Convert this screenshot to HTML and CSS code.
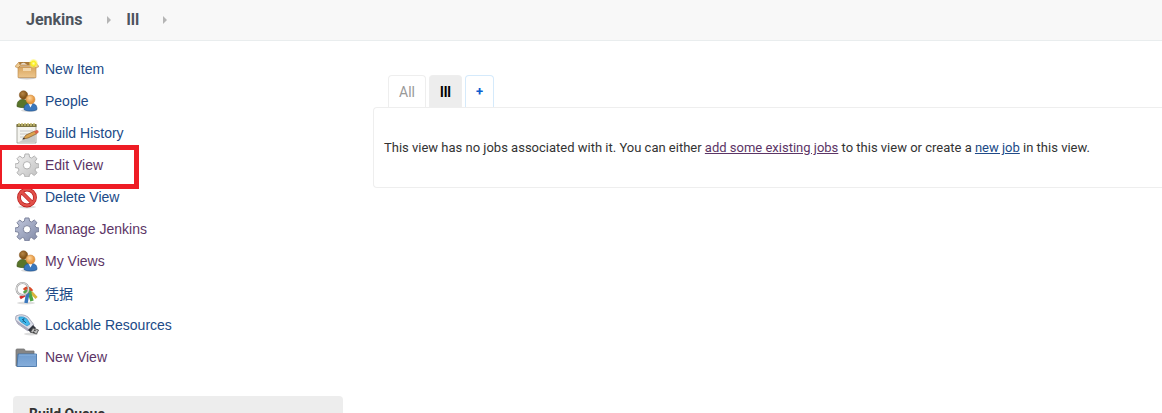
FILE: index.html
```html
<!DOCTYPE html>
<html lang="en">

<head>
    <meta charset="UTF-8">
    <meta name="viewport" content="width=device-width, initial-scale=1.0">
    <title>lll [Jenkins]</title>
    <link rel="stylesheet" href="styles.css">
</head>

<body>
    <!-- shared icon parts -->
    <svg class="defs" width="0" height="0" aria-hidden="true">
        <defs>
            <linearGradient id="box" x1="0" y1="0" x2="0" y2="1"><stop offset="0" stop-color="#d9a55f"/><stop offset="1" stop-color="#edc78e"/></linearGradient>
            <linearGradient id="blue" x1="0" y1="0" x2="0" y2="1"><stop offset="0" stop-color="#6e9bcd"/><stop offset="1" stop-color="#86aedb"/></linearGradient>
            <linearGradient id="silver" x1="0" y1="0" x2="1" y2="1"><stop offset="0" stop-color="#f2f2f2"/><stop offset="1" stop-color="#c0c0c0"/></linearGradient>
            <linearGradient id="steel" x1="0" y1="0" x2="1" y2="1"><stop offset="0" stop-color="#c3c9de"/><stop offset="1" stop-color="#8089a6"/></linearGradient>
            <radialGradient id="sun"><stop offset="0" stop-color="#fffcae"/><stop offset=".5" stop-color="#fbef20"/><stop offset="1" stop-color="#fff36a" stop-opacity=".3"/></radialGradient>
            <radialGradient id="face" cx=".4" cy=".35"><stop offset="0" stop-color="#ffd7a0"/><stop offset="1" stop-color="#e5973f"/></radialGradient>
            <radialGradient id="face-dark" cx=".4" cy=".35"><stop offset="0" stop-color="#b88747"/><stop offset="1" stop-color="#835318"/></radialGradient>
            <symbol id="people" viewBox="0 0 24 24">
                <ellipse cx="14" cy="21.500" rx="8" ry="1.500" fill="#ddd"/>
                <path d="M2 17.500c0-5 2-7 6-7s5.500 3 5.500 7c-3 1.500-8.500 1.500-11.500 0z" fill="#59752a" stroke="#3f541b" stroke-width=".7"/>
                <circle cx="8.500" cy="6" r="4.200" fill="url(#face-dark)" stroke="#80501c" stroke-width=".5"/>
                <path d="M9 20.500c0-4.500 2-6 6.500-6s6.500 1.500 6.500 6c-3 2-10 2-13 0z" fill="#3977bd" stroke="#24568f" stroke-width=".7"/>
                <path d="M13.500 14.500h4l-2 4z" fill="#fff"/>
                <circle cx="15.500" cy="10.500" r="4.500" fill="url(#face)" stroke="#ce8636" stroke-width=".5"/>
            </symbol>
            <symbol id="gear" viewBox="0 0 24 24">
                <path fill-rule="evenodd" d="M10 1h4l.6 3.200 2 .8 2.700-2 2.700 2.700-2 2.700.8 2 3.200.6v3.500l-3.200.6-.8 2 2 2.700-2.700 2.700-2.700-2-2 .8-.6 2.700h-4l-.6-2.700-2-.8-2.700 2L2 19.800l2-2.700-.8-2L0 14.500V11l3.200-.6.8-2-2-2.700L4.700 3l2.700 2 2-.8zM12 8.600a3.700 3.700 0 1 0 0 7.400 3.700 3.700 0 0 0 0-7.400z"/>
            </symbol>
        </defs>
    </svg>

    <nav class="breadcrumbs">
        <a href="#">Jenkins</a>
        <span class="arrow"></span>
        <a href="#">lll</a>
        <span class="arrow"></span>
    </nav>

    <div class="page-body">
        <!-- side panel -->
        <aside class="side-panel">
            <ul class="tasks">
                <li class="task">
                    <a href="#">
                        <svg class="icon" viewBox="0 0 24 24">
                            <ellipse cx="12" cy="21" rx="9" ry="1.500" fill="#ccc"/>
                            <path d="M4 5h16v6H4z" fill="#a97838"/>
                            <path d="M5 8q3-4 6-1t7-1v4H5z" fill="#e9dccb"/>
                            <path d="M3 10h18v10.500H3z" fill="url(#box)" stroke="#b88748" stroke-width=".6"/>
                            <path d="M4 5L0 9.500l3 1.500 2-2h14l2 2 3-1.500L20 5l-1 3H5z" fill="#efcb91" stroke="#b37e3c" stroke-width=".6"/>
                            <path d="M8 11h8v3H8z" fill="#f3d8ae"/>
                            <circle cx="18.500" cy="6.500" r="4.500" fill="url(#sun)"/>
                        </svg>
                        New Item
                    </a>
                </li>
                <li class="task">
                    <a href="#"><svg class="icon"><use href="#people"/></svg>People</a>
                </li>
                <li class="task">
                    <a href="#">
                        <svg class="icon" viewBox="0 0 24 24">
                            <path d="M2 4h19v18H2z" fill="#f4f4ef" stroke="#999990" stroke-width=".8"/>
                            <path d="M1.500 3h20v3h-20z" fill="#7b7443"/>
                            <path d="M4 2v3M7 2v3M10 2v3M13 2v3M16 2v3M19 2v3" stroke="#c9bd73" stroke-width="1.500"/>
                            <path d="M5 10h13M5 13h9M5 16h5" stroke="#c8c8c8" stroke-width="1"/>
                            <path d="M20 21H4l7-4 8-3h1z" fill="#c9c9c5"/>
                            <path d="M8 18l3-4 9-4 2 2.500-9 4.500z" fill="#dda44e" stroke="#805826" stroke-width=".7"/>
                            <path d="M19 10.500l2.500-1.500q2.500 0 2 2.500l-2.500 1.500z" fill="#d9614a"/>
                            <path d="M7 18.500l2-2 1 1.500z" fill="#333"/>
                        </svg>
                        Build History
                    </a>
                </li>
                <li class="task highlighted">
                    <a class="visited" href="#"><svg class="icon gear-light"><use href="#gear"/></svg>Edit View</a>
                </li>
                <li class="task">
                    <a href="#">
                        <svg class="icon" viewBox="0 0 24 24">
                            <ellipse cx="12" cy="22" rx="9" ry="1.500" fill="#ddd"/>
                            <circle cx="12" cy="12.500" r="8" fill="#fff" stroke="#b81616" stroke-width="3.800"/>
                            <path d="M6.500 7l11 11" stroke="#b81616" stroke-width="3.800"/>
                            <circle cx="12" cy="12.500" r="8" fill="none" stroke="#e1514a" stroke-width="2.500"/>
                            <path d="M6.500 7l11 11" stroke="#e1514a" stroke-width="2.500"/>
                        </svg>
                        Delete View
                    </a>
                </li>
                <li class="task">
                    <a class="visited" href="#"><svg class="icon gear-dark"><use href="#gear"/></svg>Manage Jenkins</a>
                </li>
                <li class="task">
                    <a class="visited" href="#"><svg class="icon"><use href="#people"/></svg>My Views</a>
                </li>
                <li class="task">
                    <a href="#">
                        <svg class="icon" viewBox="0 0 24 24">
                            <ellipse cx="11" cy="22" rx="9" ry="1.500" fill="#ddd"/>
                            <path d="M10 14l-5 3" stroke="#d72c2c" stroke-width="3"/>
                            <path d="M16 11l5.500 6" stroke="#d8b43c" stroke-width="3"/>
                            <path d="M14 10l3 10" stroke="#4ca642" stroke-width="3.500"/>
                            <path d="M9 9q4-5 8 1" fill="none" stroke="#d94a28" stroke-width="3"/>
                            <path d="M9 12q3-4 7 0" fill="none" stroke="#54a648" stroke-width="3"/>
                            <path d="M13 12q-1 4-2 10" fill="none" stroke="#3977bd" stroke-width="3.500"/>
                            <circle cx="7.500" cy="8" r="6" fill="none" stroke="#999" stroke-width="2"/>
                            <circle cx="7.500" cy="8" r="6" fill="none" stroke="#eee" stroke-width=".9"/>
                        </svg>
                        <span class="cjk">凭据</span>
                    </a>
                </li>
                <li class="task">
                    <a href="#">
                        <svg class="icon" viewBox="0 0 24 24">
                            <ellipse cx="16" cy="21" rx="7" ry="1.500" fill="#ddd"/>
                            <path d="M1 3q6-3 12 1l6 8-6 6-10-7Q-1 6 1 3z" fill="#dcdfe9" stroke="#9a9caf" stroke-width=".8"/>
                            <path d="M1 7q1 3 4 5l8 6 1-2-9-6z" fill="#a8a6bb"/>
                            <path d="M4 4q5-1 8 2l3 5-3 2-6-4q-3-3-2-5z" fill="#42b8ed" stroke="#2388be" stroke-width=".6"/>
                            <path d="M7 6l4 4M9 5l-1 4" stroke="#1c638a" stroke-width="1"/>
                            <path d="M18 12l-5 5 3 3 5-5z" fill="#333740"/>
                            <path d="M18 15l5.500 2-2 4-6-2z" fill="#bbb" stroke="#444" stroke-width=".8"/>
                            <path d="M19 17l1.500.5M18 19l1.500.5" stroke="#222" stroke-width="1.200"/>
                        </svg>
                        Lockable Resources
                    </a>
                </li>
                <li class="task">
                    <a class="visited" href="#">
                        <svg class="icon" viewBox="0 0 24 24">
                            <path d="M1 21V5q0-1 1-1h7q1 0 1 2h9v15z" fill="#858585" stroke="#757575" stroke-width=".8"/>
                            <path d="M3 9h18.500v12.500H2z" fill="url(#blue)" stroke="#3e6ea5" stroke-width=".8"/>
                            <path d="M4 10h17" stroke="#98bde4" stroke-width=".8"/>
                        </svg>
                        New View
                    </a>
                </li>
            </ul>
            <section class="pane">
                <h2 class="pane-header">Build Queue</h2>
            </section>
        </aside>

        <!-- main panel -->
        <main class="main-panel">
            <nav class="tabs">
                <a class="tab" href="#">All</a>
                <a class="tab active" href="#">lll</a>
                <a class="tab add" href="#">+</a>
            </nav>
            <div class="view">
                This view has no jobs associated with it. You can either
                <a class="visited" href="#">add some existing jobs</a>
                to this view or create a <a href="#">new job</a> in this view.
            </div>
        </main>
    </div>
</body>

</html>
```
FILE: styles.css
```css
/* base */

body {
    margin: 0;
    height: 100vh;
    overflow: hidden;
    background: #fff;
    color: #333;
    font: 13px/20px Roboto, "Liberation Sans", sans-serif;
}

a {
    color: #204a87;
}

a.visited {
    color: #5c3566;
}

.defs {
    position: absolute;
}

/* breadcrumbs */

.breadcrumbs {
    display: flex;
    align-items: center;
    height: 40px;
    padding-left: 26px;
    border-bottom: 1px solid #e9edee;
    background: #f8f8f8;
}

.breadcrumbs a {
    color: #4d545d;
    font-size: 16px;
    font-weight: bold;
    text-decoration: none;
}

.arrow {
    margin: 0 16px 0 24px;
    border: 4px solid transparent;
    border-right: 0;
    border-left-color: #b5b5b5;
}

/* side panel */

.page-body {
    display: flex;
}

.side-panel {
    flex: none;
    width: 330px;
    padding: 12px 30px 0 13px;
}

.tasks {
    margin: 0 0 23px;
    padding: 0;
    list-style: none;
}

.task {
    position: relative;
}

.task a {
    display: flex;
    align-items: center;
    gap: 6px;
    height: 32px;
    padding-left: 2px;
    font-family: "Liberation Sans", Arial, sans-serif;
    font-size: 14px;
    text-decoration: none;
}

.icon {
    flex: none;
    width: 24px;
    height: 24px;
}

.gear-light {
    fill: url(#silver);
    stroke: #b2b2b2;
    stroke-width: 1px;
}

.gear-dark {
    fill: url(#steel);
    stroke: #7d839c;
    stroke-width: 1px;
}

.cjk {
    font-family: "Noto Sans CJK SC", sans-serif;
}

/* red frame around the entry */
.highlighted::after {
    content: "";
    position: absolute;
    z-index: 1;
    top: -4px;
    left: -16px;
    width: 132px;
    height: 34px;
    border: 5px solid #ee1c24;
    pointer-events: none;
}

.pane {
    border-radius: 4px 4px 0 0;
    background: #ededed;
}

.pane-header {
    margin: 0;
    padding: 8px 16px;
    font-size: 14px;
}

/* main panel */

.main-panel {
    flex: auto;
    padding-top: 34px;
}

.tabs {
    display: flex;
    gap: 3px;
    padding-left: 15px;
}

.tab {
    padding: 6px 10px 5px;
    border: 1px solid #eee;
    border-bottom: 0;
    border-radius: 4px 4px 0 0;
    color: #999;
    font-size: 14px;
    text-decoration: none;
}

.tab.active {
    background: #ededed;
    color: #000;
    font-weight: bold;
}

.tab.add {
    border-color: #d5eafb;
    color: #0b5ed0;
    font-size: 13px;
    font-weight: bold;
}

.view {
    padding: 30px 10px 29px;
    border: 1px solid #eee;
    border-right: 0;
    border-radius: 4px 0 0 4px;
}
```
